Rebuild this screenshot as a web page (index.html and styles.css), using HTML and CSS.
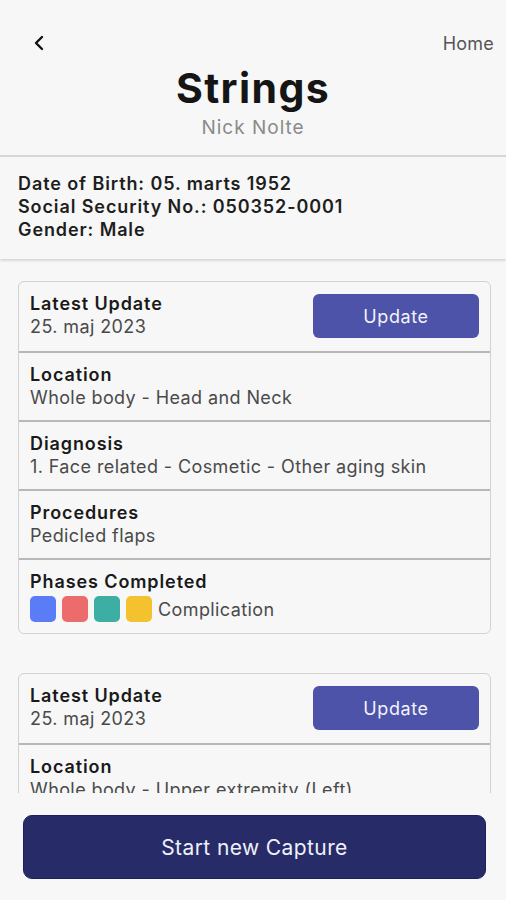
FILE: index.html
```html
<!DOCTYPE html>
<html lang="en">
<head>
  <meta charset="utf-8">
  <title>Strings - Nick Nolte</title>
  <link rel="stylesheet" href="styles.css">
</head>
<body>
<div class="screen">
  <header class="top">
    <div class="status-bar"></div>
    <nav class="nav-bar">
      <button class="back-btn" aria-label="Back">
        <svg width="14" height="16" viewBox="0 0 14 16"><path d="M10 2 L4 8 L10 14" fill="none" stroke="#111" stroke-width="2.4" stroke-linecap="round" stroke-linejoin="round"/></svg>
      </button>
      <a class="home-link" href="#">Home</a>
    </nav>
    <div class="title-block">
      <h1>Strings</h1>
      <p class="patient-name">Nick Nolte</p>
    </div>
  </header>

  <section class="patient-info">
    <p>Date of Birth: 05. marts 1952</p>
    <p>Social Security No.: 050352-0001</p>
    <p>Gender: Male</p>
  </section>

  <main class="captures">
    <div class="capture-card">
      <div class="card-row row-head">
        <div>
          <h3>Latest Update</h3>
          <p>25. maj 2023</p>
        </div>
        <button class="update-btn">Update</button>
      </div>
      <div class="card-row">
        <h3>Location</h3>
        <p>Whole body - Head and Neck</p>
      </div>
      <div class="card-row">
        <h3>Diagnosis</h3>
        <p>1. Face related - Cosmetic - Other aging skin</p>
      </div>
      <div class="card-row">
        <h3>Procedures</h3>
        <p>Pedicled flaps</p>
      </div>
      <div class="card-row row-phases">
        <h3>Phases Completed</h3>
        <div class="phases">
          <span class="phase blue"></span>
          <span class="phase red"></span>
          <span class="phase teal"></span>
          <span class="phase yellow"></span>
          <span class="phase-label">Complication</span>
        </div>
      </div>
    </div>

    <div class="capture-card">
      <div class="card-row row-head">
        <div>
          <h3>Latest Update</h3>
          <p>25. maj 2023</p>
        </div>
        <button class="update-btn">Update</button>
      </div>
      <div class="card-row">
        <h3>Location</h3>
        <p>Whole body - Upper extremity (Left)</p>
      </div>
    </div>
  </main>

  <footer class="bottom">
    <button class="capture-btn">Start new Capture</button>
  </footer>
</div>
</body>
</html>
```

FILE: styles.css
```css
* {
  box-sizing: border-box;
}

body {
  margin: 0;
  font-family: 'Inter', 'Noto Sans', sans-serif;
  background-color: #f7f7f7;
  color: #1c1c1c;
}

.screen {
  display: flex;
  flex-direction: column;
  height: 900px;
  overflow: hidden;
}

.status-bar {
  height: 25px;
}

.nav-bar {
  display: flex;
  justify-content: space-between;
  align-items: center;
  height: 36px;
  padding: 0 12px 0 32px;
}

.back-btn {
  background: none;
  border: none;
  padding: 0;
  display: flex;
  cursor: pointer;
}

.home-link {
  font-size: 18px;
  letter-spacing: 0.2px;
  color: #555;
  text-decoration: none;
}

.title-block {
  text-align: center;
  padding-top: 2px;
  padding-bottom: 15px;
  border-bottom: 2px solid #d6d6d6;
}

.title-block h1 {
  margin: 0;
  font-size: 41px;
  font-weight: 700;
  letter-spacing: 1.4px;
  line-height: 50px;
  color: #151515;
}

.patient-name {
  margin: 3px 0 0;
  font-size: 19px;
  letter-spacing: 1px;
  line-height: 24px;
  color: #8a8a8a;
}

.patient-info {
  padding: 15px 18px 18px;
  box-shadow: 0 2px 2px rgba(0, 0, 0, 0.12);
  position: relative;
}

.patient-info p {
  margin: 0;
  font-size: 18px;
  font-weight: 600;
  letter-spacing: 0.9px;
  line-height: 23px;
  color: #1e1e1e;
}

.captures {
  flex: 1;
  overflow: hidden;
  padding: 22px 15px 0 18px;
}

.capture-card {
  border: 1.5px solid #d2d2d2;
  border-radius: 6px;
  margin-bottom: 39px;
}

.card-row {
  padding: 10px 11px 13px;
  height: 69px;
  border-top: 2px solid #b8b8b8;
}

.card-row:first-child {
  border-top: none;
}

.card-row h3 {
  margin: 0;
  font-size: 18px;
  font-weight: 600;
  letter-spacing: 0.9px;
  line-height: 23px;
  color: #1a1a1a;
}

.card-row p {
  margin: 0;
  font-size: 18px;
  letter-spacing: 0.4px;
  line-height: 23px;
  color: #4a4a4a;
}

.row-head {
  display: flex;
  justify-content: space-between;
  align-items: flex-start;
}

.update-btn {
  width: 166px;
  height: 44px;
  margin-top: 2px;
  background-color: #4d53a8;
  color: #f2f2fa;
  border: none;
  border-radius: 6px;
  font-family: inherit;
  font-size: 18px;
  letter-spacing: 0.6px;
  cursor: pointer;
}

.row-phases {
  height: 75px;
}

.phases {
  display: flex;
  align-items: center;
  gap: 6px;
  margin-top: 3px;
}

.phase {
  width: 26px;
  height: 26px;
  border-radius: 5px;
}

.phase.blue {
  background-color: #5b7cf7;
}

.phase.red {
  background-color: #ec6b6b;
}

.phase.teal {
  background-color: #3daea3;
}

.phase.yellow {
  background-color: #f4c22f;
}

.phase-label {
  font-size: 18px;
  letter-spacing: 0.4px;
  color: #4a4a4a;
}

.bottom {
  height: 107px;
  padding: 22px 20px 0 23px;
}

.capture-btn {
  width: 463px;
  height: 64px;
  background-color: #272c68;
  color: #eef0fa;
  border: 1px solid #1c2060;
  border-radius: 9px;
  font-family: inherit;
  font-size: 21px;
  letter-spacing: 0.4px;
  cursor: pointer;
}
```
